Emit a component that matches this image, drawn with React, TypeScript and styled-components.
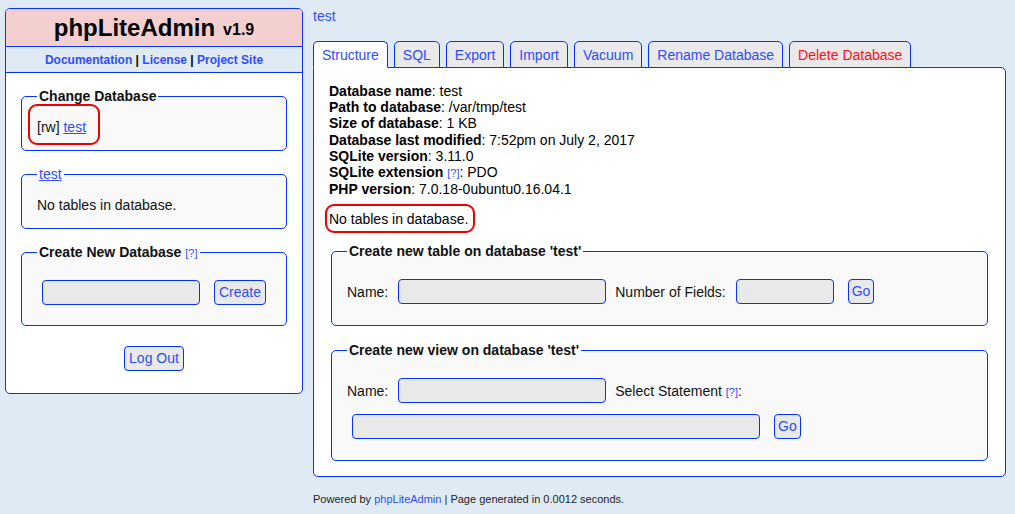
import React from "react";
import styled, { createGlobalStyle } from "styled-components";

const BLUE = "#0433ff";
const LINK = "#2f4dff";

const GlobalStyle = createGlobalStyle`
  html, body {
    margin: 0;
    padding: 0;
    background: #e0eaf5;
    font-family: "Liberation Sans", Arial, sans-serif;
    font-size: 14px;
    color: #111;
  }
  * { box-sizing: border-box; }
`;

const Page = styled.div`
  display: flex;
  align-items: flex-start;
  gap: 10px;
  padding: 8px 9px 0 5px;
`;

// ---- left column ----
const Sidebar = styled.div`
  width: 298px;
  flex-shrink: 0;
  background: #fff;
  border: 1px solid ${BLUE};
  border-radius: 5px;
  overflow: hidden;
`;

const Brand = styled.div`
  height: 38px;
  display: flex;
  align-items: center;
  justify-content: center;
  background: #f3cfcf;
  border-bottom: 1px solid ${BLUE};
  font-weight: bold;
  font-size: 24px;
  color: #000;
`;

const Version = styled.span`
  font-size: 16px;
  margin-left: 8px;
  margin-top: 4px;
`;

const NavBar = styled.div`
  height: 26px;
  display: flex;
  align-items: center;
  justify-content: center;
  background: #e0eaf5;
  border-bottom: 1px solid ${BLUE};
  font-size: 12px;
  font-weight: bold;
  color: #000;
  white-space: pre;
`;

const NavLink = styled.a`
  color: ${LINK};
  text-decoration: none;
`;

const SideBody = styled.div`
  display: flex;
  flex-direction: column;
  gap: 15px;
  padding: 15px 15px 22px;
`;

const Fieldset = styled.fieldset<{ $pad?: string; $inset?: boolean }>`
  margin: ${(p) => (p.$inset ? "0 2px" : "0")};
  padding: ${(p) => p.$pad ?? "15px 15px 15px"};
  border: 1px solid ${BLUE};
  border-radius: 5px;
  background: #f9f9f9;
  min-width: 0;
`;

const Legend = styled.legend`
  padding: 0 2px;
  font-weight: bold;
  font-size: 14px;
  color: #111;
`;

const PlainLegend = styled.legend`
  padding: 0 2px;
  font-size: 14px;
`;

const TextLink = styled.a`
  color: ${LINK};
  text-decoration: underline;
`;

const Help = styled.a`
  color: ${LINK};
  font-size: 11px;
  font-weight: normal;
  text-decoration: none;
`;

// red annotation ring drawn over the text
const Ring = styled.span<{ $t: number; $r: number; $b: number; $l: number }>`
  position: relative;
  &::after {
    content: "";
    position: absolute;
    top: -${(p) => p.$t}px;
    right: -${(p) => p.$r}px;
    bottom: -${(p) => p.$b}px;
    left: -${(p) => p.$l}px;
    border: 2px solid #ee0000;
    border-radius: 9px;
    pointer-events: none;
  }
`;

const CenterRow = styled.div<{ $gap?: number }>`
  display: flex;
  justify-content: center;
  align-items: center;
  gap: ${(p) => p.$gap ?? 0}px;
`;

const LogoutRow = styled(CenterRow)`
  margin-top: 5px;
`;

const Input = styled.input<{ $w: number }>`
  width: ${(p) => p.$w}px;
  height: 25px;
  margin: 0;
  background: #e9e9e9;
  border: 1px solid ${BLUE};
  border-radius: 4px;
  font-family: inherit;
  font-size: 14px;
`;

const Button = styled.button`
  height: 25px;
  margin: 0;
  padding: 0 4px;
  background: #e9e9e9;
  border: 1px solid ${BLUE};
  border-radius: 4px;
  color: ${LINK};
  font-family: inherit;
  font-size: 14px;
  line-height: 23px;
`;

// ---- right column ----
const Main = styled.div`
  flex: 1;
  min-width: 0;
`;

const Crumb = styled.a`
  display: block;
  color: ${LINK};
  text-decoration: none;
  line-height: 16px;
  margin-bottom: 17px;
`;

const TabBar = styled.div`
  display: flex;
  gap: 6px;
`;

const Tab = styled.a<{ $active?: boolean; $danger?: boolean }>`
  position: relative;
  z-index: 1;
  height: 27px;
  margin-bottom: -1px;
  padding: 0 8px;
  line-height: 27px;
  border: 1px solid ${BLUE};
  border-bottom-color: ${(p) => (p.$active ? "#fff" : BLUE)};
  border-radius: 5px 5px 0 0;
  background: ${(p) => (p.$active ? "#fff" : "#e9e9e9")};
  color: ${(p) => (p.$danger ? "#ff1111" : LINK)};
  text-decoration: none;
  font-size: 14px;
`;

const Panel = styled.div`
  background: #fff;
  border: 1px solid ${BLUE};
  border-radius: 0 5px 5px 5px;
  padding: 15px 15px 15px;
`;

const Info = styled.div`
  line-height: 16.17px;
  color: #000;
`;

const Key = styled.b``;

const Empty = styled.div`
  margin: 14px 0 16px;
  color: #000;
`;

const Stack = styled.div`
  display: flex;
  flex-direction: column;
  gap: 16px;
`;

const FormRow = styled.div<{ $indent?: number }>`
  display: flex;
  align-items: center;
  gap: 10px;
  padding-left: ${(p) => p.$indent ?? 0}px;
`;

const Label = styled.span`
  color: #111;
  white-space: nowrap;
`;

const SideLabel = styled(Label)`
  margin-left: -1px;
`;

const GoButton = styled(Button)`
  margin-left: 4px;
  padding: 0 3px;
`;

const Footer = styled.div`
  margin-top: 16px;
  font-size: 11px;
  color: #222;
`;

const FooterLink = styled.a`
  color: ${LINK};
  text-decoration: none;
`;

const tabs = ["Structure", "SQL", "Export", "Import", "Vacuum", "Rename Database"];

const info: [string, React.ReactNode][] = [
  ["Database name", "test"],
  ["Path to database", "/var/tmp/test"],
  ["Size of database", "1 KB"],
  ["Database last modified", "7:52pm on July 2, 2017"],
  ["SQLite version", "3.11.0"],
  [
    "SQLite extension",
    <>
      {" "}
      <Help href="#">[?]</Help>: PDO
    </>,
  ],
  ["PHP version", "7.0.18-0ubuntu0.16.04.1"],
];

export default function App() {
  return (
    <>
      <GlobalStyle />
      <Page>
        <Sidebar>
          <Brand>
            phpLiteAdmin<Version>v1.9</Version>
          </Brand>
          <NavBar>
            <NavLink href="#">Documentation</NavLink> | <NavLink href="#">License</NavLink> |{" "}
            <NavLink href="#">Project Site</NavLink>
          </NavBar>
          <SideBody>
            <Fieldset $pad="15px 15px 15px">
              <Legend>Change Database</Legend>
              <Ring $t={15} $r={14} $b={10} $l={9}>
                [rw] <TextLink href="#">test</TextLink>
              </Ring>
            </Fieldset>
            <Fieldset>
              <PlainLegend>
                <TextLink href="#">test</TextLink>
              </PlainLegend>
              No tables in database.
            </Fieldset>
            <Fieldset $pad="20px 15px 20px">
              <Legend>
                Create New Database <Help href="#">[?]</Help>
              </Legend>
              <CenterRow $gap={14}>
                <Input $w={158} />
                <Button>Create</Button>
              </CenterRow>
            </Fieldset>
            <LogoutRow>
              <Button>Log Out</Button>
            </LogoutRow>
          </SideBody>
        </Sidebar>

        <Main>
          <Crumb href="#">test</Crumb>
          <TabBar>
            {tabs.map((t, i) => (
              <Tab key={t} href="#" $active={i === 0}>
                {t}
              </Tab>
            ))}
            <Tab href="#" $danger>
              Delete Database
            </Tab>
          </TabBar>
          <Panel>
            <Info>
              {info.map(([k, v]) => (
                <div key={k}>
                  <Key>{k}</Key>
                  {typeof v === "string" ? `: ${v}` : v}
                </div>
              ))}
            </Info>
            <Empty>
              <Ring $t={7} $r={7} $b={6} $l={4}>
                No tables in database.
              </Ring>
            </Empty>
            <Stack>
              <Fieldset $inset $pad="20px 15px 21px">
                <Legend>Create new table on database 'test'</Legend>
                <FormRow>
                  <Label>Name:</Label>
                  <Input $w={208} />
                  <SideLabel>Number of Fields:</SideLabel>
                  <Input $w={98} />
                  <GoButton>Go</GoButton>
                </FormRow>
              </Fieldset>
              <Fieldset $inset $pad="20px 15px 21px">
                <Legend>Create new view on database 'test'</Legend>
                <FormRow>
                  <Label>Name:</Label>
                  <Input $w={208} />
                  <SideLabel>
                    Select Statement <Help href="#">[?]</Help>:
                  </SideLabel>
                </FormRow>
                <FormRow $indent={5} style={{ marginTop: 11 }}>
                  <Input $w={408} />
                  <GoButton>Go</GoButton>
                </FormRow>
              </Fieldset>
            </Stack>
          </Panel>
          <Footer>
            Powered by <FooterLink href="#">phpLiteAdmin</FooterLink> | Page generated in 0.0012 seconds.
          </Footer>
        </Main>
      </Page>
    </>
  );
}
